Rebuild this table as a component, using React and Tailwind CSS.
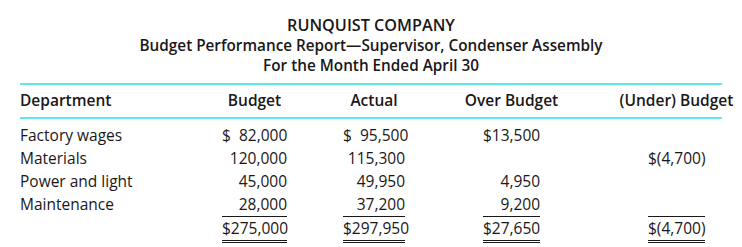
const rows = [
  { name: 'Factory wages', budget: '$  82,000', actual: '$  95,500', over: '$13,500', under: '' },
  { name: 'Materials', budget: '120,000', actual: '115,300', over: '', under: '$(4,700)' },
  { name: 'Power and light', budget: '45,000', actual: '49,950', over: '4,950', under: '' },
  { name: 'Maintenance', budget: '28,000', actual: '37,200', over: '9,200', under: '' },
];

const totals = { budget: '$275,000', actual: '$297,950', over: '$27,650', under: '$(4,700)' };

// widths of the number blocks and the space in front of each
const cols = [
  { key: 'budget', cls: 'w-[65px]' },
  { key: 'actual', cls: 'ml-[56px] w-[62px]' },
  { key: 'over', cls: 'ml-[78px] w-[57px]' },
  { key: 'under', cls: 'ml-[108px] w-[57px]' },
];

const headers = ['Budget', 'Actual', 'Over Budget', '(Under) Budget'];

export default function App() {
  return (
    <div className="w-[742px] h-[247px] bg-white text-[#1a1718] overflow-hidden font-['Open_Sans',sans-serif]">
      <div className="pt-[15px] text-center font-semibold leading-[20px]">
        <div className="text-[16.2px]">RUNQUIST COMPANY</div>
        <div className="text-[15.3px]">Budget Performance Report—Supervisor, Condenser Assembly</div>
        <div className="text-[15.3px]">For the Month Ended April 30</div>
      </div>

      <div className="mt-[8px] mx-[20px] border-t-2 border-b-2 border-[#5ee9f0] flex h-[36px] items-center text-[15.5px] font-semibold">
        <div className="w-[202px]">Department</div>
        {cols.map((c, i) => (
          <div key={c.key} className={`${c.cls} flex justify-center whitespace-nowrap`}>
            {headers[i]}
          </div>
        ))}
      </div>

      <div className="mt-[5px] ml-[20px] text-[15.5px] leading-[23px]">
        {rows.map((r, ri) => (
          <div key={r.name} className="flex">
            <div className="w-[202px]">{r.name}</div>
            {cols.map((c) => (
              <div
                key={c.key}
                className={`${c.cls} text-right whitespace-pre ${ri === rows.length - 1 ? 'border-b border-[#1a1718]' : ''}`}
              >
                {r[c.key]}
              </div>
            ))}
          </div>
        ))}
        <div className="flex">
          <div className="w-[202px]"></div>
          {cols.map((c) => (
            <div key={c.key} className={`${c.cls} text-right whitespace-nowrap border-b-[3px] border-double border-[#1a1718]`}>
              {totals[c.key]}
            </div>
          ))}
        </div>
      </div>
    </div>
  );
}
